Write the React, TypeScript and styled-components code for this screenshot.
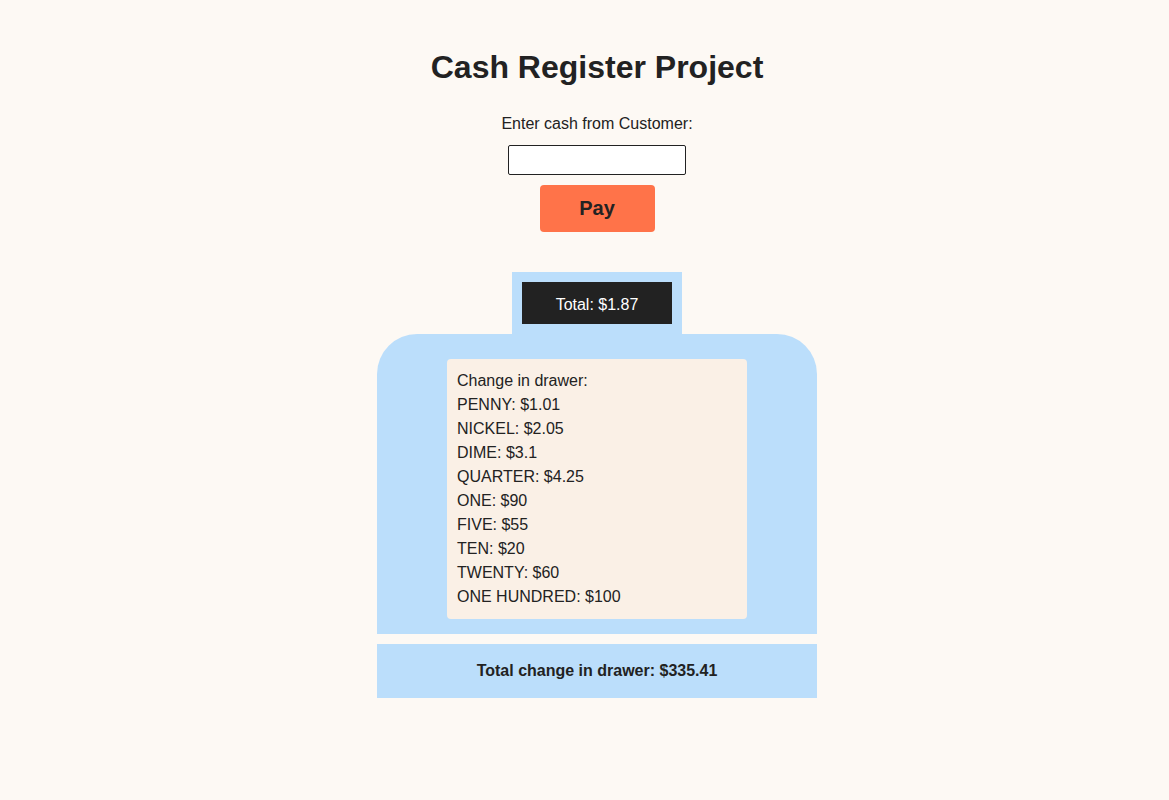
import React from "react";
import styled, { createGlobalStyle } from "styled-components";

const Global = createGlobalStyle`
  html, body { margin: 0; padding: 0; background: #fdf9f4; }
  body { font-family: "Liberation Sans", Arial, sans-serif; color: #222; }
`;

const Page = styled.main`
  display: flex;
  flex-direction: column;
  align-items: center;
  padding: 48px 0 0 25px;
`;

const Title = styled.h1`
  margin: 0;
  font-size: 32px;
  line-height: 38px;
  font-weight: 700;
  color: #222;
`;

const Label = styled.label`
  margin-top: 28px;
  font-size: 16px;
  line-height: 20px;
`;

const CashInput = styled.input`
  margin-top: 11px;
  box-sizing: border-box;
  width: 178px;
  height: 30px;
  border: 1px solid #222;
  border-radius: 2px;
  background: #fff;
  font-size: 16px;
`;

const PayButton = styled.button`
  margin-top: 10px;
  width: 115px;
  height: 47px;
  border: none;
  border-radius: 4px;
  background: #ff7349;
  color: #222;
  font-family: "Liberation Sans", Arial, sans-serif;
  font-size: 20px;
  font-weight: 700;
`;

const Register = styled.section`
  margin-top: 40px;
  display: flex;
  flex-direction: column;
  align-items: center;
  width: 440px;
`;

const TotalFrame = styled.div`
  background: #bbdefb;
  padding: 10px;
`;

const TotalScreen = styled.div`
  width: 150px;
  height: 42px;
  background: #222;
  color: #fff;
  display: flex;
  align-items: center;
  justify-content: center;
  font-size: 16px;
  padding-top: 4px;
  box-sizing: border-box;
`;

const Drawer = styled.div`
  align-self: stretch;
  background: #bbdefb;
  border-radius: 40px 40px 0 0;
  padding: 25px 0 15px;
  display: flex;
  justify-content: center;
`;

const DrawerList = styled.div`
  width: 300px;
  box-sizing: border-box;
  background: #faf0e6;
  border-radius: 4px;
  padding: 10px;
  font-size: 16px;
  line-height: 24px;
`;

const Row = styled.div``;

const Footer = styled.div`
  align-self: stretch;
  margin-top: 10px;
  height: 54px;
  background: #bbdefb;
  display: flex;
  align-items: center;
  justify-content: center;
  font-size: 16px;
  font-weight: 700;
`;

const drawer: [string, string][] = [
  ["PENNY", "1.01"],
  ["NICKEL", "2.05"],
  ["DIME", "3.1"],
  ["QUARTER", "4.25"],
  ["ONE", "90"],
  ["FIVE", "55"],
  ["TEN", "20"],
  ["TWENTY", "60"],
  ["ONE HUNDRED", "100"],
];

export default function App() {
  return (
    <>
      <Global />
      <Page>
        <Title>Cash Register Project</Title>
        <Label htmlFor="cash">Enter cash from Customer:</Label>
        <CashInput id="cash" type="number" />
        <PayButton>Pay</PayButton>
        <Register>
          <TotalFrame>
            <TotalScreen>Total: $1.87</TotalScreen>
          </TotalFrame>
          <Drawer>
            <DrawerList>
              <Row>Change in drawer:</Row>
              {drawer.map(([n, v]) => (
                <Row key={n}>
                  {n}: ${v}
                </Row>
              ))}
            </DrawerList>
          </Drawer>
          <Footer>Total change in drawer: $335.41</Footer>
        </Register>
      </Page>
    </>
  );
}
